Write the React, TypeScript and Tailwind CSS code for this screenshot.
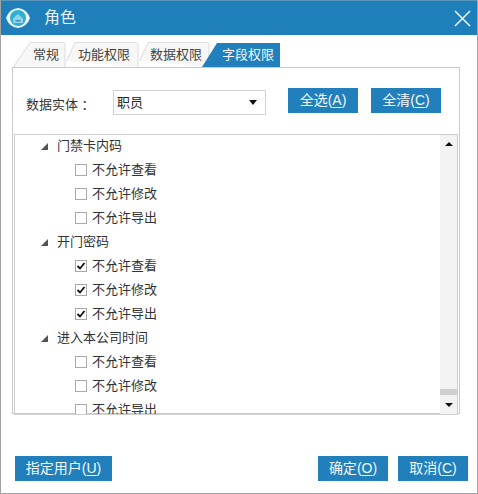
const FONT = "font-['Liberation_Sans','Noto_Sans_CJK_SC',sans-serif]";

const GROUPS = [
  { name: '门禁卡内码', checked: false },
  { name: '开门密码', checked: true },
  { name: '进入本公司时间', checked: false },
];
const PERMISSIONS = ['不允许查看', '不允许修改', '不允许导出'];

function BlueButton({ label, hotkey, className }: { label: string; hotkey: string; className: string }) {
  return (
    <button
      type="button"
      className={`flex h-[25px] items-center justify-center bg-[#2180bb] text-[14px] text-[#f2f8fc] ${className}`}
    >
      {label}(<span className="underline underline-offset-2">{hotkey}</span>)
    </button>
  );
}

function Logo() {
  return (
    <svg width="26" height="24" viewBox="0 0 26 24" className="ml-[4px]">
      <path d="M1 12Q4 3 13 2 22 3 25 12 22 21 13 22 4 21 1 12z" fill="#eef7fa" />
      <circle cx="13" cy="12" r="8" fill="#2fb0d0" />
      <path d="M8 12.5 13 8l5 4.5V17H8z" fill="#8fd3ea" />
      <path d="M10.5 14h5v1.5h-5z" fill="#3f8fc4" />
    </svg>
  );
}

function InactiveTab({ width, pad, label, path }: { width: string; pad: string; label: string; path: string }) {
  return (
    <div className={`relative h-[26px] ${width} ${pad} text-[13px] leading-[27px] text-[#444]`}>
      <svg className="absolute inset-0 h-full w-full" preserveAspectRatio="none">
        <path d={path} fill="#f7f7f7" stroke="#dcdcdc" />
      </svg>
      <span className="relative">{label}</span>
    </div>
  );
}

function Checkbox({ checked }: { checked: boolean }) {
  return (
    <span className="flex h-[12px] w-[12px] items-center justify-center border border-[#a8a8a8] bg-white">
      {checked && (
        <svg width="10" height="10" viewBox="0 0 10 10">
          <path d="M1.5 5 4 7.5 8.5 2" fill="none" stroke="#111" strokeWidth="1.8" />
        </svg>
      )}
    </span>
  );
}

export default function App() {
  return (
    <div className={`flex h-[494px] w-[478px] flex-col border-x border-b border-[#a3a3a3] bg-white ${FONT}`}>
      <div className="flex h-[35px] shrink-0 items-center border-t border-[#5b96bd] bg-[#1f7fbb]">
        <Logo />
        <span className="ml-[13px] text-[16px] text-[#e8f4fb]">角色</span>
        <svg width="17" height="17" viewBox="0 0 17 17" className="ml-auto mr-[6px]">
          <path d="M1 1 16 16M16 1 1 16" stroke="#f2f8fc" strokeWidth="1.5" />
        </svg>
      </div>

      <div className="flex flex-1 flex-col pl-[11px]">
        <div className="mt-[6px] flex h-[26px] pl-[1px]">
          <InactiveTab width="w-[53px]" pad="pl-[20px]" label="常规" path="M0.5 26 17 1.5H49Q52 1.5 52 4V26" />
          <InactiveTab width="w-[73px]" pad="pl-[12px]" label="功能权限" path="M0.5 20 9 1.5H69Q72 1.5 72 4V26" />
          <InactiveTab width="w-[71px]" pad="pl-[11px]" label="数据权限" path="M0.5 20 9 1.5H67Q70 1.5 70 4V26" />
          <div className="relative -ml-[8px] h-[26px] w-[78px] pl-[20px] text-[13px] leading-[27px] text-[#f2f8fc]">
            <svg className="absolute inset-0 h-full w-full" preserveAspectRatio="none">
              <path d="M0 26 15 2H78V26z" fill="#2180bb" />
            </svg>
            <span className="relative">字段权限</span>
          </div>
        </div>

        <div className="flex h-[347px] w-[448px] flex-col border border-[#cbcbcb]">
          <div className="flex items-start pt-[20px]">
            <span className="ml-[13px] mt-[7px] w-[87px] text-[13px] leading-[20px] text-[#333]">数据实体 ：</span>
            <div className="mt-[2px] flex h-[25px] w-[153px] items-center justify-between border border-[#d2d2d2] pl-[3px] pr-[8px] text-[13px] text-[#222]">
              职员
              <svg width="8" height="5" viewBox="0 0 8 5">
                <path d="M0 0H8L4 5z" fill="#111" />
              </svg>
            </div>
            <BlueButton label="全选" hotkey="A" className="ml-[22px] w-[70px]" />
            <BlueButton label="全清" hotkey="C" className="ml-[13px] w-[70px]" />
          </div>

          <div className="ml-[1px] mt-[19px] flex h-[281px] w-[444px] border border-[#cfcfcf]">
            <div className="h-full flex-1 overflow-hidden text-[13px] leading-[24px] text-[#333]">
              {GROUPS.map((group) => (
                <div key={group.name}>
                  <div className="flex h-[24px] items-center pb-[2px] pl-[26px]">
                    <svg width="7" height="7" viewBox="0 0 7 7">
                      <path d="M7 0V7H0z" fill="#555" />
                    </svg>
                    <span className="ml-[9px]">{group.name}</span>
                  </div>
                  {PERMISSIONS.map((item) => (
                    <div key={item} className="flex h-[24px] items-center pb-[2px] pl-[60px]">
                      <Checkbox checked={group.checked} />
                      <span className="ml-[5px]">{item}</span>
                    </div>
                  ))}
                </div>
              ))}
            </div>
            <div className="flex h-full w-[17px] flex-col items-center justify-between bg-[#f3f3f3] py-[7px]">
              <svg width="8" height="4" viewBox="0 0 8 4">
                <path d="M0 4H8L4 0z" fill="#111" />
              </svg>
              <div className="mt-auto mb-[8px] h-[6px] w-full bg-[#cfcfcf]" />
              <svg width="8" height="4" viewBox="0 0 8 4">
                <path d="M0 0H8L4 4z" fill="#111" />
              </svg>
            </div>
          </div>
        </div>

        <div className="mt-[42px] flex pl-[3px] pr-[9px]">
          <BlueButton label="指定用户" hotkey="U" className="w-[97px]" />
          <BlueButton label="确定" hotkey="O" className="ml-auto w-[70px]" />
          <BlueButton label="取消" hotkey="C" className="ml-[10px] w-[70px]" />
        </div>
      </div>
    </div>
  );
}
